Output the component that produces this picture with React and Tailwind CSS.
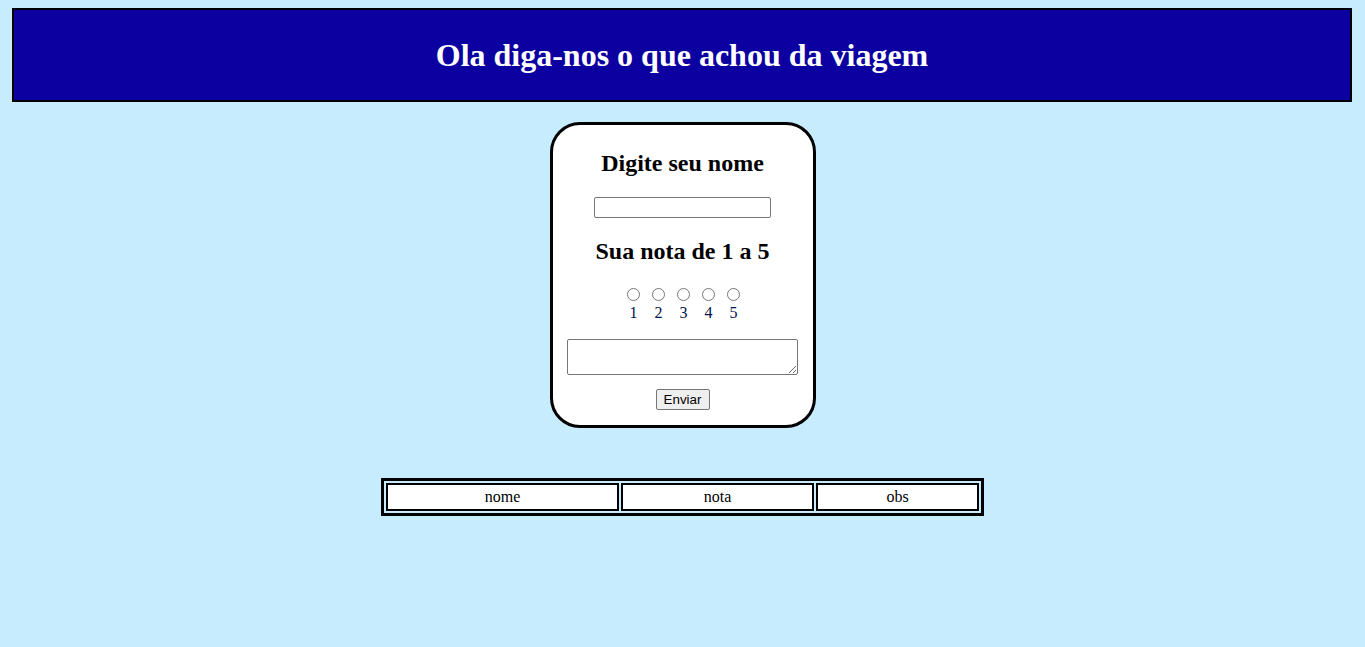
import { useState } from "react";

const NOTAS = [1, 2, 3, 4, 5];

export default function App() {
  const [nota, setNota] = useState(null);

  return (
    <div className="min-h-screen bg-[#c6ecfe] pt-2 pb-10 font-['Liberation_Serif',serif] text-black">
      <header className="ml-3 mr-[13px] flex h-[94px] items-center justify-center border-2 border-black bg-[#0c00a0]">
        <h1 className="text-[32px] font-bold leading-9 text-white">Ola diga-nos o que achou da viagem</h1>
      </header>

      <form
        className="mx-auto mt-5 flex h-[306px] w-[266px] flex-col items-center rounded-[30px] border-[3px] border-black bg-white"
        onSubmit={(e) => e.preventDefault()}
      >
        <h2 className="mt-6 text-[24px] font-bold leading-7">Digite seu nome</h2>
        <input
          type="text"
          className="mt-5 h-[21px] w-[177px] rounded-[2px] border border-[#767676] bg-white px-0.5 text-[13px]"
        />

        <h2 className="mt-[19px] text-[24px] font-bold leading-7">Sua nota de 1 a 5</h2>
        <div className="mt-[23px] ml-[2px] flex gap-3">
          {NOTAS.map((n) => (
            <label key={n} className="flex w-[13px] flex-col items-center">
              <input
                type="radio"
                name="nota"
                checked={nota === n}
                onChange={() => setNota(n)}
                className="h-[13px] w-[13px]"
              />
              <span className="mt-[3px] text-[16px] leading-[18px] text-[#00134a]">{n}</span>
            </label>
          ))}
        </div>

        <textarea className="mt-[17px] h-[36px] w-[231px] rounded-[2px] border border-[#767676] bg-white" />

        <button
          type="submit"
          className="mt-[14px] h-[21px] w-[54px] rounded-[2px] border border-[#767676] bg-[#efefef] font-['Liberation_Sans',Arial,sans-serif] text-[13.33px] leading-none text-black"
        >
          Enviar
        </button>
      </form>

      <table className="mx-auto mt-[50px] w-[603px] border-separate border-spacing-[2px] border-[3px] border-black text-[16px]">
        <tbody>
          <tr>
            <td className="h-[28px] w-[233px] border-2 border-black bg-white text-center leading-5">nome</td>
            <td className="h-[28px] w-[193px] border-2 border-black bg-white text-center leading-5">nota</td>
            <td className="h-[28px] border-2 border-black bg-white text-center leading-5">obs</td>
          </tr>
        </tbody>
      </table>
    </div>
  );
}
